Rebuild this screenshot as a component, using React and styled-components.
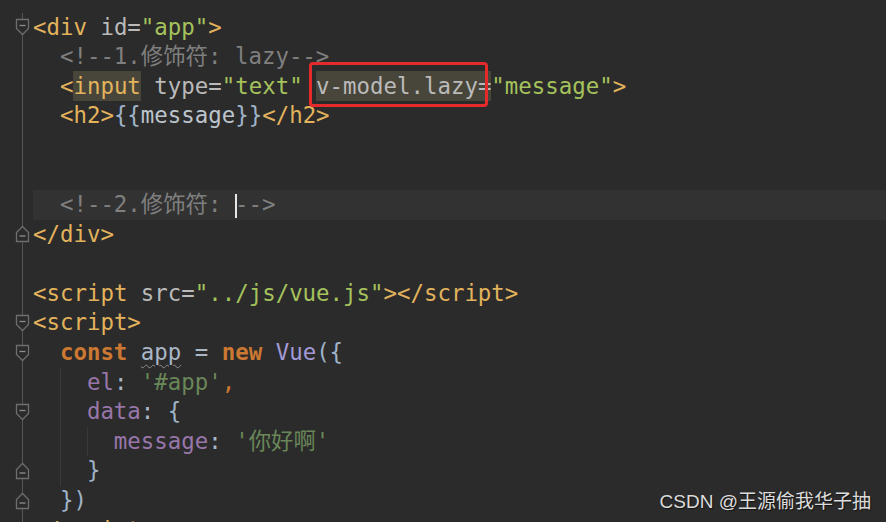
import React from 'react';
import styled, { createGlobalStyle } from 'styled-components';

const GlobalStyle = createGlobalStyle`
  html, body {
    margin: 0;
    padding: 0;
    height: 100%;
    overflow: hidden;
    background: #2b2b2b;
  }
  #root {
    height: 100%;
  }
`;

const colors = {
  tag: '#e2b35c',
  attr: '#bababa',
  value: '#a5c25c',
  comment: '#7f7f7f',
  text: '#bcc4cc',
  brace: '#9fb3c8',
  keyword: '#cc7832',
  cls: '#a399d6',
  prop: '#9876aa',
  str: '#6a8759',
  plain: '#a9b7c6',
};

const Editor = styled.div`
  position: relative;
  height: 100%;
  padding-top: 12.5px;
  box-sizing: border-box;
  background: #2b2b2b;
  font-family: "DejaVu Sans Mono", "Noto Sans CJK SC", monospace;
  font-size: 22.4px;
  overflow: hidden;
`;

const Row = styled.div`
  display: flex;
  height: 29.6px;
  line-height: 29.6px;
`;

const Gutter = styled.div`
  flex: 0 0 33px;
  display: flex;
  align-items: center;
  padding-left: 15px;
  box-sizing: border-box;
  background: linear-gradient(to right, transparent 22px, #555555 22px, #555555 23px, transparent 23px);
`;

const Code = styled.div`
  flex: 1;
  white-space: pre;
  background: ${(p) => (p.$current ? '#323232' : 'transparent')};
`;

const Indent = styled.span`
  display: inline-block;
  width: 26.96px;
  height: 29.6px;
  vertical-align: top;
  box-shadow: ${(p) => (p.$guide ? 'inset 1px 0 0 #393939' : 'none')};
`;

const Tok = styled.span`
  color: ${(p) => colors[p.$kind] || colors.plain};
  font-weight: ${(p) => (p.$bold ? 700 : 400)};
`;

const Mark = styled.span`
  background: #48463a;
  padding: 2px 0;
`;

const Boxed = styled.span`
  position: relative;
  &::after {
    content: '';
    position: absolute;
    left: -7px;
    right: -10px;
    top: -11px;
    bottom: -8px;
    border: 3px solid #e42a2a;
    border-radius: 4px;
  }
`;

const Squiggle = styled.span`
  text-decoration: underline wavy #8c8c8c;
  text-decoration-thickness: 1px;
  text-underline-offset: 4px;
`;

const Caret = styled.span`
  display: inline-block;
  width: 2px;
  height: 24px;
  margin-right: -2px;
  vertical-align: middle;
  background: #e6e6e6;
`;

const Watermark = styled.div`
  position: absolute;
  right: 15px;
  bottom: 9px;
  font-family: "Liberation Sans", "Noto Sans CJK SC", sans-serif;
  font-size: 19px;
  color: #dcdcdc;
  text-shadow: 1px 1px 1px rgba(0, 0, 0, 0.6);
`;

const Fold = ({ type }) => (
  <svg width="15" height="18" viewBox="0 0 15 18">
    {type === 'open' ? (
      <>
        <path d="M1.5 1.5 H13.5 V10.5 L7.5 16.5 L1.5 10.5 Z" fill="#2b2b2b" stroke="#6e6e6e" strokeWidth="1.3" />
        <path d="M4.5 7.5 H10.5" stroke="#8e8e8e" strokeWidth="1.3" />
      </>
    ) : (
      <>
        <path d="M1.5 16.5 H13.5 V7.5 L7.5 1.5 L1.5 7.5 Z" fill="#2b2b2b" stroke="#6e6e6e" strokeWidth="1.3" />
        <path d="M4.5 11 H10.5" stroke="#8e8e8e" strokeWidth="1.3" />
      </>
    )}
  </svg>
);

const Line = ({ fold, current, indent = 0, guides = 0, children }) => (
  <Row>
    <Gutter>{fold && <Fold type={fold} />}</Gutter>
    <Code $current={current}>
      {Array.from({ length: indent }).map((_, i) => (
        <Indent key={i} $guide={i > 0 && i <= guides} />
      ))}
      {children}
    </Code>
  </Row>
);

const App = () => {
  return (
    <>
      <GlobalStyle />
      <Editor>
        <Line fold="open">
          <Tok $kind="tag">&lt;div </Tok>
          <Tok $kind="attr">id=</Tok>
          <Tok $kind="value">"app"</Tok>
          <Tok $kind="tag">&gt;</Tok>
        </Line>
        <Line indent={1}>
          <Tok $kind="comment">&lt;!--1.修饰符: lazy--&gt;</Tok>
        </Line>
        <Line indent={1}>
          <Tok $kind="tag">&lt;</Tok>
          <Mark><Tok $kind="tag">input</Tok></Mark>
          <Tok $kind="attr"> type=</Tok>
          <Tok $kind="value">"text"</Tok>
          <Tok $kind="attr"> </Tok>
          <Mark>
            <Boxed><Tok $kind="attr">v-model.lazy</Tok></Boxed>
            <Tok $kind="attr">=</Tok>
          </Mark>
          <Tok $kind="value">"message"</Tok>
          <Tok $kind="tag">&gt;</Tok>
        </Line>
        <Line indent={1}>
          <Tok $kind="tag">&lt;h2&gt;</Tok>
          <Tok $kind="brace">{'{{'}</Tok>
          <Tok $kind="text">message</Tok>
          <Tok $kind="brace">{'}}'}</Tok>
          <Tok $kind="tag">&lt;/h2&gt;</Tok>
        </Line>
        <Line />
        <Line />
        <Line indent={1} current>
          <Tok $kind="comment">&lt;!--2.修饰符: </Tok>
          <Caret />
          <Tok $kind="comment">--&gt;</Tok>
        </Line>
        <Line fold="close">
          <Tok $kind="tag">&lt;/div&gt;</Tok>
        </Line>
        <Line />
        <Line>
          <Tok $kind="tag">&lt;script </Tok>
          <Tok $kind="attr">src=</Tok>
          <Tok $kind="value">"../js/vue.js"</Tok>
          <Tok $kind="tag">&gt;&lt;/script&gt;</Tok>
        </Line>
        <Line fold="open">
          <Tok $kind="tag">&lt;script&gt;</Tok>
        </Line>
        <Line fold="open" indent={1}>
          <Tok $kind="keyword" $bold>const </Tok>
          <Squiggle><Tok $kind="plain">app</Tok></Squiggle>
          <Tok $kind="plain"> = </Tok>
          <Tok $kind="keyword" $bold>new </Tok>
          <Tok $kind="cls">Vue</Tok>
          <Tok $kind="brace">({'{'}</Tok>
        </Line>
        <Line indent={2} guides={1}>
          <Tok $kind="prop">el</Tok>
          <Tok $kind="plain">: </Tok>
          <Tok $kind="str">'#app'</Tok>
          <Tok $kind="keyword">,</Tok>
        </Line>
        <Line fold="open" indent={2} guides={1}>
          <Tok $kind="prop">data</Tok>
          <Tok $kind="plain">: </Tok>
          <Tok $kind="brace">{'{'}</Tok>
        </Line>
        <Line indent={3} guides={2}>
          <Tok $kind="prop">message</Tok>
          <Tok $kind="plain">: </Tok>
          <Tok $kind="str">'你好啊'</Tok>
        </Line>
        <Line fold="close" indent={2} guides={1}>
          <Tok $kind="brace">{'}'}</Tok>
        </Line>
        <Line fold="close" indent={1}>
          <Tok $kind="brace">{'})'}</Tok>
        </Line>
        <Line fold="close">
          <Tok $kind="tag">&lt;/script&gt;</Tok>
        </Line>
        <Watermark>CSDN @王源偷我华子抽</Watermark>
      </Editor>
    </>
  );
};

export default App;
